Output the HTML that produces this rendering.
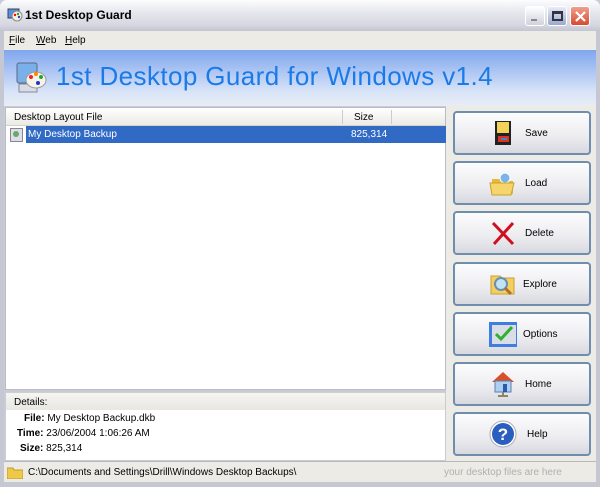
<!DOCTYPE html>
<html><head><style>
*{box-sizing:border-box;margin:0;padding:0}
body{width:600px;height:487px;overflow:hidden;background:#c9ccd6;font-family:"Liberation Sans",sans-serif;font-size:10px;position:relative}
.abs{position:absolute}
.title{left:0;top:0;width:600px;height:31px;background:linear-gradient(#fdfdfe,#e6e7ee 40%,#d6d7e0 80%,#c3c5d2);border-radius:7px 7px 0 0}
.title span{position:absolute;left:25px;top:8px;font-weight:bold;font-size:12px;color:#000}
.wb{top:6px;width:20px;height:20px;border-radius:3px;border:1px solid #fff}
.menu{left:4px;top:31px;width:592px;height:19px;background:#ecebe6}
.menu span{position:absolute;top:4px;font-size:10px}
.banner{left:4px;top:50px;width:592px;height:56px;background:linear-gradient(#7fa6ee 0%,#a9c3f3 35%,#d9e4f8 75%,#e8edf5)}
.banner .t{position:absolute;left:52px;top:11px;font-size:26px;color:#1a7be8;letter-spacing:0.4px}
.list{left:5px;top:107px;width:441px;height:283px;background:#fff;border:1px solid #b8bcc8}
.hdr{left:6px;top:108px;width:439px;height:18px;background:linear-gradient(#fff,#ebeae4);border-bottom:1px solid #d6d3c8}
.sel{left:26px;top:126px;width:420px;height:17px;background:#316ac5}
.panel{left:446px;top:106px;width:150px;height:355px;background:#ecebe6}
.btn{left:453px;width:138px;height:44px;border:2px solid #6f8dae;border-radius:4px;background:linear-gradient(#fcfcfd,#ececf0 60%,#d8d9e0)}
.btn span{position:absolute;left:70px;top:15px;font-size:10px;color:#000}
.btn .ic{position:absolute;left:34px;top:6px;width:28px;height:28px}
.dh{left:6px;top:392px;width:439px;height:18px;background:linear-gradient(#f5f5f2,#e8e7e2);border-top:1px solid #cfcfcf}
.det{left:6px;top:410px;width:439px;height:50px;background:#fff}
.det div{position:absolute;font-size:10px}
.status{left:4px;top:461px;width:592px;height:21px;background:#ecebe6;border-top:1px solid #b8b8b8}
</style></head><body>
<div class="abs title"><span>1st Desktop Guard</span>
<svg class="abs" style="left:7px;top:7px" width="16" height="16"><rect x="1" y="2" width="11" height="9" fill="#5a8fe0" stroke="#345"/><circle cx="10" cy="9" r="5" fill="#f4f0e0" stroke="#888"/><circle cx="8" cy="8" r="1.2" fill="red"/><circle cx="11" cy="7" r="1.2" fill="#2a2"/><circle cx="12" cy="10" r="1.2" fill="#24c"/></svg>
<div class="abs wb" style="left:525px;background:linear-gradient(#fff,#cfd1dc)"><div class="abs" style="left:5px;top:12px;width:6px;height:2px;background:#888"></div></div>
<div class="abs wb" style="left:547px;background:linear-gradient(#e8ecf8,#9aa8cc)"><div class="abs" style="left:4px;top:4px;width:11px;height:10px;border:2px solid #334;border-top-width:3px"></div></div>
<div class="abs wb" style="left:570px;background:linear-gradient(#f0a090,#d84a30)"><svg class="abs" style="left:3px;top:3px" width="13" height="13"><path d="M2 2L11 11M11 2L2 11" stroke="#fff" stroke-width="2.2"/></svg></div>
</div>
<div class="abs" style="left:0;top:31px;width:4px;height:456px;background:#c5c7d2"></div>
<div class="abs" style="left:596px;top:31px;width:4px;height:456px;background:#c5c7d2"></div>
<div class="abs menu"><span style="left:5px"><u>F</u>ile</span><span style="left:32px"><u>W</u>eb</span><span style="left:61px"><u>H</u>elp</span></div>
<div class="abs banner"><span class="t">1st Desktop Guard for Windows v1.4</span>
<svg class="abs" style="left:10px;top:10px" width="34" height="36"><rect x="3" y="3" width="20" height="20" rx="2" fill="#7ab0ea" stroke="#5a6a80"/><rect x="5" y="24" width="18" height="8" fill="#d8dde5" stroke="#889"/><ellipse cx="22" cy="20" rx="10" ry="8" fill="#f6f3ea" stroke="#999"/><circle cx="17" cy="17" r="2" fill="#e22"/><circle cx="22" cy="14" r="2" fill="#f80"/><circle cx="27" cy="17" r="2" fill="#2a2"/><circle cx="24" cy="23" r="2" fill="#23c"/></svg></div>
<div class="abs list"></div>
<div class="abs hdr"><span class="abs" style="left:8px;top:4px">Desktop Layout File</span><div class="abs" style="left:336px;top:2px;width:1px;height:14px;background:#ccc"></div><span class="abs" style="left:348px;top:4px">Size</span><div class="abs" style="left:385px;top:2px;width:1px;height:14px;background:#ccc"></div></div>
<svg class="abs" style="left:10px;top:128px" width="13" height="14"><rect x=".5" y=".5" width="12" height="13" fill="#dde" stroke="#888"/><circle cx="6" cy="6" r="3" fill="#6a6"/></svg>
<div class="abs sel"><span class="abs" style="left:2px;top:3px;color:#fff">My Desktop Backup</span><span class="abs" style="left:325px;top:3px;color:#fff">825,314</span></div>
<div class="abs panel"></div>
<div class="abs btn" style="top:111px"><svg class="ic" viewBox="0 0 28 28"><rect x="6" y="2" width="16" height="24" fill="#222"/><rect x="8" y="3" width="12" height="11" fill="#f3d25a"/><rect x="9" y="17" width="11" height="6" fill="#e03020"/><rect x="12" y="19" width="6" height="2" fill="#38c"/></svg><span>Save</span></div>
<div class="abs btn" style="top:161px"><svg class="ic" viewBox="0 0 28 28"><path d="M3 10h8l2 2h11v13H3z" fill="#e8b838"/><circle cx="16" cy="9" r="5" fill="#7ab4e8" stroke="#fff"/><path d="M1 14h24l-3 12H3z" fill="#f6d66a" stroke="#c9a030"/></svg><span>Load</span></div>
<div class="abs btn" style="top:211px"><svg class="ic" viewBox="0 0 28 28"><path d="M4 4L24 25M24 4L5 25" stroke="#d01020" stroke-width="3"/></svg><span>Delete</span></div>
<div class="abs btn" style="top:262px"><svg class="ic" viewBox="0 0 28 28"><path d="M2 6h9l2 2h12v16H2z" fill="#f3cf60" stroke="#c9a030"/><circle cx="12" cy="14" r="6" fill="#bfe4f6" stroke="#6b8fb0" stroke-width="2"/><path d="M16 18l6 6" stroke="#b07030" stroke-width="3"/></svg><span style="left:68px">Explore</span></div>
<div class="abs btn" style="top:312px"><svg class="ic" viewBox="0 0 28 28"><rect x="0" y="2" width="30" height="25" fill="#3f7de0"/><rect x="3" y="5" width="24" height="19" fill="#d8dde6"/><path d="M7 14l5 5 11-12" stroke="#30b030" stroke-width="3" fill="none"/></svg><span style="left:68px">Options</span></div>
<div class="abs btn" style="top:362px"><svg class="ic" viewBox="0 0 28 28"><path d="M3 12L14 2l11 10z" fill="#d8502a"/><rect x="6" y="11" width="16" height="11" fill="#aed0f0" stroke="#5a80b0"/><rect x="14" y="14" width="4" height="8" fill="#2a5ab0"/><path d="M14 22v4M9 26h10" stroke="#886" stroke-width="2"/></svg><span style="left:70px">Home</span></div>
<div class="abs btn" style="top:412px"><svg class="ic" viewBox="0 0 28 28"><circle cx="14" cy="14" r="13" fill="#fff" stroke="#aab"/><circle cx="14" cy="14" r="11" fill="#2a5fc0"/><text x="14" y="20" text-anchor="middle" font-family="Liberation Sans" font-weight="bold" font-size="17" fill="#fff">?</text></svg><span style="left:72px">Help</span></div>
<div class="abs dh"><span class="abs" style="left:8px;top:4px">Details:</span></div>
<div class="abs det"><div style="left:18px;top:3px"><b>File:</b> My Desktop Backup.dkb</div><div style="left:11px;top:18px"><b>Time:</b> 23/06/2004 1:06:26 AM</div><div style="left:14px;top:33px"><b>Size:</b> 825,314</div></div>
<div class="abs status"><svg class="abs" style="left:3px;top:4px" width="16" height="13"><path d="M0 2h6l1 2h9v9H0z" fill="#f0c848" stroke="#c09830"/></svg><span class="abs" style="left:24px;top:5px">C:\Documents and Settings\Drill\Windows Desktop Backups\</span><span class="abs" style="left:440px;top:5px;color:#b0b0b0">your desktop files are here</span></div>
<div class="abs" style="left:0;top:482px;width:600px;height:5px;background:#c5c7d2"></div>
</body></html>
